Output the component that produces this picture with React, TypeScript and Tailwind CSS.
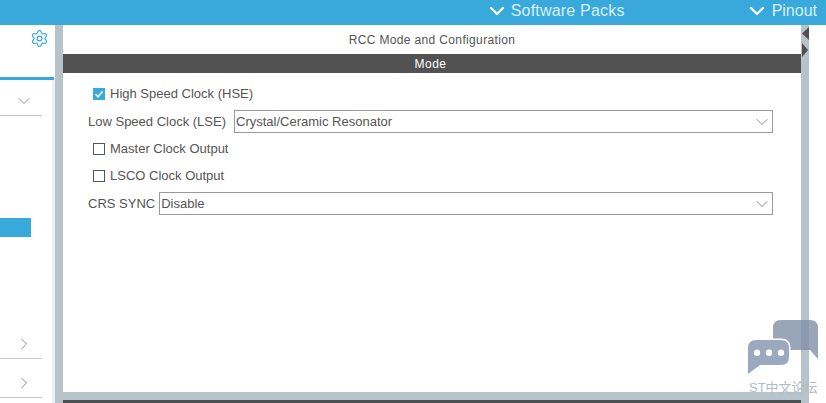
import { ChevronDown, ChevronRight, Settings } from "lucide-react";

const font = "font-['Liberation_Sans',Arial,sans-serif]";

function Select({ value, className }: { value: string; className: string }) {
  return (
    <div className={`flex h-[23px] items-center justify-between border border-[#9a9a9a] pl-[1px] ${className}`}>
      <span className="text-[13px]">{value}</span>
      <ChevronDown className="h-[20px] w-[20px] text-[#777]" strokeWidth={1} />
    </div>
  );
}

function Check({ label, checked }: { label: string; checked?: boolean }) {
  return (
    <div className="flex h-[20px] items-center pl-[5px]">
      <div
        className={`mr-[5px] flex h-[12px] w-[12px] items-center justify-center ${
          checked ? "bg-[#39a9dc]" : "border border-[#555]"
        }`}
      >
        {checked && (
          <svg viewBox="0 0 12 12" className="h-[12px] w-[12px]">
            <path d="M2.5 6.2 L5 8.8 L9.5 3.5" fill="none" stroke="white" strokeWidth="1.5" />
          </svg>
        )}
      </div>
      <span className="text-[13px]">{label}</span>
    </div>
  );
}

function SideRow({ open, height, pad }: { open?: boolean; height: string; pad: string }) {
  const Icon = open ? ChevronDown : ChevronRight;
  return (
    <div className={`flex w-[42px] items-center justify-end border-b border-[#c4c4c4] pr-[8px] ${height} ${pad}`}>
      <Icon className="h-[20px] w-[20px] text-[#777]" strokeWidth={1} />
    </div>
  );
}

export default function App() {
  return (
    <div className={`relative flex h-[403px] w-[826px] flex-col overflow-hidden bg-white text-[#555] ${font}`}>
      {/* top bar */}
      <div className="flex h-[25px] items-center justify-end bg-[#39a9dc] pb-[4px] pr-[9px] text-[16px] text-[#d9f0fb]">
        <ChevronDown className="mr-[2px] h-[24px] w-[24px] text-white" strokeWidth={2.25} />
        <span className="tracking-[0.2px]">Software Packs</span>
        <ChevronDown className="ml-[120px] mr-[3px] h-[24px] w-[24px] text-white" strokeWidth={2.25} />
        <span>Pinout</span>
      </div>

      <div className="flex min-h-0 flex-1">
        {/* left panel */}
        <div className="flex w-[55px] flex-col">
          <div className="flex h-[55px] w-[54px] justify-end border-b-[3px] border-[#39a9dc]">
            <Settings className="mr-[5px] mt-[4px] h-[19px] w-[19px] text-[#39a9dc]" strokeWidth={1.5} />
          </div>
          <div className="flex flex-1 flex-col border-r-[3px] border-[#eef1f1]">
            <SideRow open height="h-[36px]" pad="pt-[7px]" />
            <div className="mt-[102px] h-[19px] w-[31px] bg-[#39a9dc]" />
            <div className="h-[83px]" />
            <SideRow height="h-[39px]" pad="pt-[10px]" />
            <SideRow height="h-[39px]" pad="pt-[10px]" />
          </div>
        </div>

        {/* main splitter */}
        <div className="flex flex-1 flex-col bg-[#b7c3ca]">
          <div className="flex min-h-0 flex-1">
            <div className="w-[8px]" />
            <div className="flex flex-1 flex-col bg-white">
              <div className="flex h-[29px] items-center justify-center pt-[1px] text-[12px] tracking-[0.35px]">
                RCC Mode and Configuration
              </div>
              <div className="flex h-[19px] items-center justify-center bg-[#525252] pr-[3px] text-[12px] tracking-[0.5px] text-white">
                Mode
              </div>
              <div className="flex flex-col pl-[25px] pr-[28px] pt-[11px]">
                <Check label="High Speed Clock (HSE)" checked />
                <div className="mt-[6px] flex items-center">
                  <span className="mr-[8px] text-[13px]">Low Speed Clock (LSE)</span>
                  <Select value="Crystal/Ceramic Resonator" className="flex-1" />
                </div>
                <div className="mt-[6px]">
                  <Check label="Master Clock Output" />
                </div>
                <div className="mt-[7px]">
                  <Check label="LSCO Clock Output" />
                </div>
                <div className="mt-[6px] flex items-center">
                  <span className="mr-[4px] text-[13px]">CRS SYNC</span>
                  <Select value="Disable" className="flex-1" />
                </div>
              </div>
            </div>
            <div className="relative w-[8px]">
              <svg viewBox="0 0 8 30" className="absolute left-0 top-[2px] h-[30px] w-[8px]">
                <path d="M8 0 L1 6.5 L8 13 Z" fill="#4f4f4f" />
                <path d="M1 16 L7 23 L1 30 Z" fill="#4f4f4f" />
              </svg>
            </div>
          </div>
          <div className="h-[8px]" />
          <div className="mx-[8px] h-[3px] bg-[#4a4f52]" />
        </div>
        <div className="w-[17px] bg-white" />
      </div>

      {/* forum watermark */}
      <div className="absolute left-[747px] top-[320px] h-[83px] w-[79px]">
        <svg viewBox="0 0 79 60" className="absolute left-0 top-0 h-[60px] w-[79px]">
          <path
            d="M26 8 Q26 0 34 0 H63 Q71 0 71 8 V39 L63 30 H34 Q26 30 26 22 Z"
            fill="#7f90a9"
            fillOpacity="0.8"
          />
          <path
            d="M9 20 H34 Q42 20 42 28 V37 Q42 45 34 45 H13 L1 54 V28 Q1 20 9 20 Z"
            fill="#9aa9bd"
            stroke="white"
            strokeWidth="3"
            paintOrder="stroke"
          />
          <circle cx="10" cy="32.7" r="3.2" fill="white" />
          <circle cx="22" cy="32.7" r="3.2" fill="white" />
          <circle cx="34" cy="32.7" r="3.2" fill="white" />
        </svg>
        <span className="absolute left-[2px] top-[58px] whitespace-nowrap font-['Liberation_Sans','Noto_Sans_CJK_SC',sans-serif] text-[13px] text-[#b3bcc9]">
          ST中文论坛
        </span>
      </div>
    </div>
  );
}
